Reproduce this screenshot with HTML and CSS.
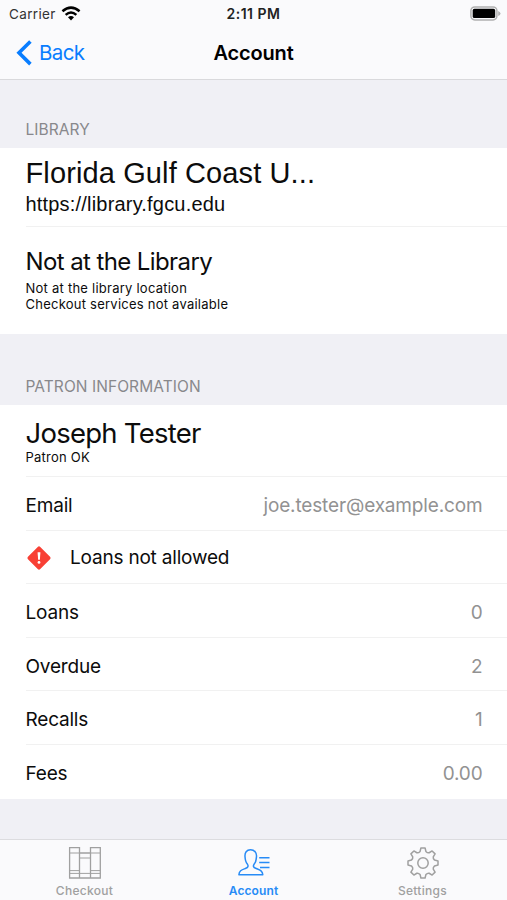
FILE: index.html
```html
<!DOCTYPE html>
<html lang="en">
<head>
    <meta charset="UTF-8">
    <meta name="viewport" content="width=device-width, initial-scale=1.0">
    <title>Account</title>
    <link rel="stylesheet" href="styles.css">
</head>
<body>
    <header class="header">
        <div class="status-bar">
            <div class="carrier">
                <span>Carrier</span>
                <svg class="wifi" width="20" height="15" viewBox="0 0 18 14" fill="none" stroke="#000" stroke-width="2.3">
                    <path d="M1 4.9 Q9 -1.9 17 4.9"/>
                    <path d="M4 8.3 Q9 3.9 14 8.3"/>
                    <path d="M6.2 10.6 Q9 8.2 11.8 10.6 L9 13.5 Z" fill="#000" stroke="none"/>
                </svg>
            </div>
            <span class="time">2:11 PM</span>
            <div class="battery-wrap">
                <svg width="31" height="15" viewBox="0 0 31 15">
                    <rect x="0.9" y="0.9" width="26" height="13" rx="3.8" fill="#fafafc" stroke="#b0b0b0" stroke-width="1.5"/>
                    <rect x="2.7" y="2.7" width="22.5" height="9.4" rx="1.7" fill="#000"/>
                    <path d="M28.2 5 Q30.5 6 30.5 7.5 Q30.5 9 28.2 10 Z" fill="#b0b0b0"/>
                </svg>
            </div>
        </div>
        <div class="nav-bar">
            <a class="back">
                <svg width="16" height="26" viewBox="0 0 16 26" fill="none" stroke="#087dff" stroke-width="3.6">
                    <path d="M14.4 1.5 L3 12.8 L14.4 24.1"/>
                </svg>
                <span>Back</span>
            </a>
            <h1 class="nav-title">Account</h1>
        </div>
    </header>

    <main class="content">
        <h2 class="section-title library-title">LIBRARY</h2>
        <div class="list">
            <div class="row library">
                <div class="library-name">Florida Gulf Coast U...</div>
                <div class="library-url">https://library.fgcu.edu</div>
            </div>
            <div class="row location">
                <div class="location-title">Not at the Library</div>
                <div class="small location-text">Not at the library location</div>
                <div class="small">Checkout services not available</div>
            </div>
        </div>

        <h2 class="section-title patron-title">PATRON INFORMATION</h2>
        <div class="list">
            <div class="row patron">
                <div class="patron-name">Joseph Tester</div>
                <div class="small patron-status">Patron OK</div>
            </div>
            <div class="row item">
                <span>Email</span>
                <span class="value">joe.tester@example.com</span>
            </div>
            <div class="row item warning">
                <svg width="26" height="26" viewBox="0 0 26 26">
                    <rect x="4.3" y="4.3" width="17.4" height="17.4" rx="1.8" fill="#f84035" transform="rotate(45 13 13)"/>
                    <path d="M11.6 7.2 H14.4 L13.9 14.8 H12.1 Z" fill="#fff"/>
                    <circle cx="13" cy="17.4" r="1.4" fill="#fff"/>
                </svg>
                <span>Loans not allowed</span>
            </div>
            <div class="row item">
                <span>Loans</span>
                <span class="value">0</span>
            </div>
            <div class="row item">
                <span>Overdue</span>
                <span class="value">2</span>
            </div>
            <div class="row item">
                <span>Recalls</span>
                <span class="value">1</span>
            </div>
            <div class="row item">
                <span>Fees</span>
                <span class="value">0.00</span>
            </div>
        </div>
    </main>

    <nav class="tab-bar">
        <a class="tab">
            <svg width="34" height="34" viewBox="0 0 34 34" fill="none" stroke="#a0a0a0" stroke-width="1.3">
                <path d="M1.6 1.7 H11.5 V32 H1.6 Z M22.5 1.7 H32.3 V32 H22.5 Z M11.5 7 H22.5 M11.5 32 H22.5"/>
                <path d="M1.6 7 H11.5 M1.6 24.6 H11.5 M1.6 27.4 H11.5 M22.5 7 H32.3 M22.5 24.6 H32.3 M22.5 27.4 H32.3 M11.5 12 H22.5 M11.5 27.4 H22.5" stroke-width="1"/>
            </svg>
            <span>Checkout</span>
        </a>
        <a class="tab active">
            <svg width="34" height="34" viewBox="0 0 34 34" fill="none" stroke="#278bf6" stroke-width="1.5" stroke-linejoin="round">
                <path d="M13.5 3.8 C9.5 3.8 7.7 6.7 8 10.5 C8.2 14.6 9.3 17 10.5 18.3 C11.6 20 11 21.4 8.8 22.3 C4.7 23.9 2.1 24.6 1.9 28.8 H25.8 C25.6 24.6 22.6 23.9 18.7 22.3 C16.4 21.4 15.9 20 17 18.3 C18.3 17 19.3 14.6 19.5 10.5 C19.8 6.7 17.5 3.8 13.5 3.8 Z"/>
                <path d="M22.2 11.8 H32.5 M22.2 16.6 H32.5 M23 21.6 H32.5"/>
            </svg>
            <span>Account</span>
        </a>
        <a class="tab">
            <svg width="34" height="34" viewBox="-17 -17 34 34" fill="none" stroke="#a0a0a0" stroke-width="1.5" stroke-linejoin="round">
                <path d="M-2.1 -15 H2.1 L2.9 -11.6 Q4.5 -9.9 6.15 -10.25 L9.12 -12.09 L12.09 -9.12 L10.25 -6.15 Q9.9 -4.5 11.6 -2.9 L15 -2.1 V2.1 L11.6 2.9 Q9.9 4.5 10.25 6.15 L12.09 9.12 L9.12 12.09 L6.15 10.25 Q4.5 9.9 2.9 11.6 L2.1 15 H-2.1 L-2.9 11.6 Q-4.5 9.9 -6.15 10.25 L-9.12 12.09 L-12.09 9.12 L-10.25 6.15 Q-9.9 4.5 -11.6 2.9 L-15 2.1 V-2.1 L-11.6 -2.9 Q-9.9 -4.5 -10.25 -6.15 L-12.09 -9.12 L-9.12 -12.09 L-6.15 -10.25 Q-4.5 -9.9 -2.9 -11.6 Z"/>
                <circle r="5.2"/>
            </svg>
            <span>Settings</span>
        </a>
    </nav>
</body>
</html>
```
FILE: styles.css
```css
* {
    box-sizing: border-box;
}
body {
    margin: 0;
    height: 900px;
    display: flex;
    flex-direction: column;
    overflow: hidden;
    background-color: #f0f0f5;
    color: #0c0c0c;
    font-family: Inter, "Liberation Sans", sans-serif;
    font-size: 19px;
}
h1, h2 {
    margin: 0;
}
.header {
    height: 80px;
    background-color: #fafafc;
    border-bottom: 1px solid #d9d9dc;
}
.status-bar {
    display: grid;
    grid-template-columns: 1fr auto 1fr;
    height: 26px;
    align-items: center;
    padding: 1px 6px 0 9px;
    font-size: 13.5px;
}
.carrier {
    display: flex;
    align-items: center;
    gap: 5px;
    color: #333;
    letter-spacing: 0.35px;
}
.wifi {
    margin-bottom: 1px;
}
.time {
    margin-right: 3px;
    font-size: 14px;
    font-weight: 600;
    color: #222;
    letter-spacing: 0.5px;
}
.battery-wrap {
    display: flex;
    justify-content: flex-end;
}
.nav-bar {
    display: grid;
    grid-template-columns: 1fr auto 1fr;
    align-items: center;
    height: 53px;
    padding: 0 16px;
}
.back {
    display: flex;
    align-items: center;
    gap: 7px;
    color: #087dff;
    font-size: 20.5px;
    letter-spacing: -0.6px;
}
.nav-title {
    font-size: 20px;
    font-weight: 600;
    color: #000;
    letter-spacing: -0.15px;
}
.content {
    flex: 1;
}
.section-title {
    display: flex;
    align-items: flex-end;
    padding: 0 25.5px 8px;
    font-size: 15.5px;
    line-height: 20px;
    font-weight: 400;
    color: #88888c;
    letter-spacing: 0.07px;
}
.library-title {
    height: 68px;
}
.patron-title {
    height: 71px;
}
.list {
    background-color: #fff;
    padding-left: 25.5px;
}
.row {
    border-bottom: 1px solid #f1f1f1;
}
.row:last-child {
    border-bottom: none;
}
.library {
    height: 79px;
    padding-top: 8px;
    font-family: "Liberation Sans", Arial, sans-serif;
}
.library-name {
    font-size: 29px;
    line-height: 34px;
    letter-spacing: 0.12px;
}
.library-url {
    font-size: 20px;
    line-height: 28px;
    letter-spacing: 0.19px;
}
.location {
    height: 107px;
    padding-top: 19px;
}
.location-title {
    font-size: 24px;
    line-height: 32px;
    letter-spacing: -0.6px;
}
.small {
    font-size: 13px;
    line-height: 16px;
    letter-spacing: 0.24px;
}
.location-text {
    margin-top: 2px;
}
.patron {
    height: 72px;
    padding-top: 10px;
}
.patron-name {
    font-size: 27.5px;
    line-height: 36px;
    letter-spacing: -0.75px;
}
.patron-status {
    line-height: 13px;
}
.item {
    display: flex;
    align-items: center;
    height: 53.6px;
    padding: 4px 24.5px 0 0;
    letter-spacing: -0.2px;
}
.value {
    margin-left: auto;
    color: #929292;
    letter-spacing: -0.15px;
}
.warning {
    gap: 18.5px;
    padding-top: 2px;
}
.tab-bar {
    display: grid;
    grid-template-columns: repeat(3, 1fr);
    height: 61px;
    padding-top: 6px;
    background-color: #fafafc;
    border-top: 1px solid #dcdcdf;
}
.tab {
    display: flex;
    flex-direction: column;
    align-items: center;
    color: #a0a0a0;
    font-size: 12px;
    font-weight: 500;
    line-height: 22px;
    letter-spacing: 0.3px;
}
.tab svg {
    flex: none;
}
.active {
    color: #278bf6;
    font-weight: 600;
    letter-spacing: 0.1px;
}
```
